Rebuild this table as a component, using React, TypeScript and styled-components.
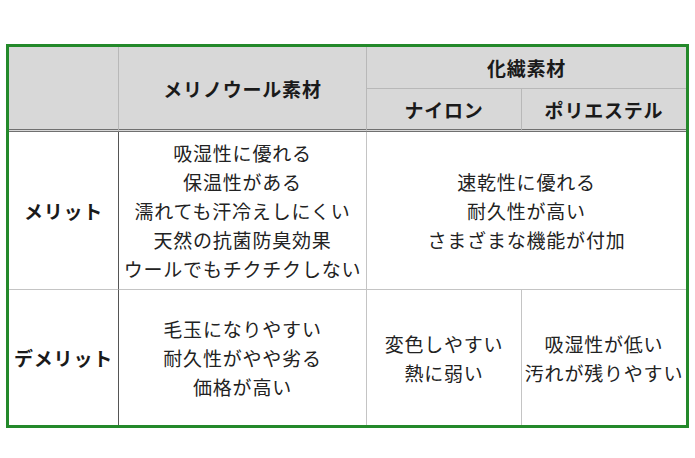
import { createGlobalStyle } from 'styled-components'
import styled from 'styled-components'

const GlobalStyle = createGlobalStyle`
  html, body {
    margin: 0;
    padding: 0;
    background: #ffffff;
  }
  body {
    font-family: "Noto Sans CJK JP", "Noto Sans", sans-serif;
    color: #222222;
  }
`

const Page = styled.div`
  padding: 44px 6px 0 6px;
`

const Table = styled.table`
  width: 683px;
  table-layout: fixed;
  border-collapse: separate;
  border-spacing: 0;
  border: 3px solid #23892a;
  font-size: 19px;
  line-height: 29px;
  letter-spacing: 0.8px;
  text-align: center;
`

const HeadCell = styled.th<{ $h: number; $last?: boolean; $dark?: boolean }>`
  height: ${(p) => p.$h}px;
  padding: 0;
  background: #d8d8d8;
  font-weight: 700;
  color: #1a1a1a;
  border-right: ${(p) => (p.$last ? 'none' : '1px solid #b8b8b8')};
  border-bottom: ${(p) => (p.$dark ? '3px double #707070' : '1px solid #b8b8b8')};
  vertical-align: middle;
`

const RowHead = styled.th<{ $h: number; $last?: boolean }>`
  height: ${(p) => p.$h}px;
  padding: 0;
  font-weight: 700;
  color: #1a1a1a;
  border-right: 1px solid #555555;
  border-bottom: ${(p) => (p.$last ? 'none' : '1px solid #c4c4c4')};
  vertical-align: middle;
`

const Cell = styled.td<{ $last?: boolean; $end?: boolean }>`
  padding: 0;
  font-weight: 400;
  border-right: ${(p) => (p.$end ? 'none' : '1px solid #c4c4c4')};
  border-bottom: ${(p) => (p.$last ? 'none' : '1px solid #c4c4c4')};
  vertical-align: middle;
`

const Line = styled.div`
  white-space: nowrap;
`

const Lines = ({ items }: { items: string[] }) => (
  <>
    {items.map((t) => (
      <Line key={t}>{t}</Line>
    ))}
  </>
)

export default function App() {
  return (
    <>
      <GlobalStyle />
      <Page>
        <Table>
          <colgroup>
            <col style={{ width: 110 }} />
            <col style={{ width: 248 }} />
            <col style={{ width: 155 }} />
            <col style={{ width: 164 }} />
          </colgroup>
          <thead>
            <tr>
              <HeadCell $h={41} rowSpan={2} $dark />
              <HeadCell $h={41} rowSpan={2} $dark>
                メリノウール素材
              </HeadCell>
              <HeadCell $h={41} colSpan={2} $last>
                化繊素材
              </HeadCell>
            </tr>
            <tr>
              <HeadCell $h={40} $dark>
                ナイロン
              </HeadCell>
              <HeadCell $h={40} $dark $last>
                ポリエステル
              </HeadCell>
            </tr>
          </thead>
          <tbody>
            <tr>
              <RowHead $h={157}>メリット</RowHead>
              <Cell>
                <Lines
                  items={[
                    '吸湿性に優れる',
                    '保温性がある',
                    '濡れても汗冷えしにくい',
                    '天然の抗菌防臭効果',
                    'ウールでもチクチクしない',
                  ]}
                />
              </Cell>
              <Cell colSpan={2} $end>
                <Lines items={['速乾性に優れる', '耐久性が高い', 'さまざまな機能が付加']} />
              </Cell>
            </tr>
            <tr>
              <RowHead $h={135} $last>
                デメリット
              </RowHead>
              <Cell $last>
                <Lines items={['毛玉になりやすい', '耐久性がやや劣る', '価格が高い']} />
              </Cell>
              <Cell $last>
                <Lines items={['変色しやすい', '熱に弱い']} />
              </Cell>
              <Cell $last $end>
                <Lines items={['吸湿性が低い', '汚れが残りやすい']} />
              </Cell>
            </tr>
          </tbody>
        </Table>
      </Page>
    </>
  )
}
